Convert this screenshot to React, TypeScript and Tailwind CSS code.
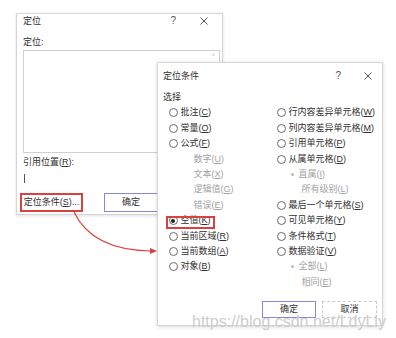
import React from 'react';

type Item = {
  t: string;
  k: string;
  sub?: 0 | 1 | 2;
  checked?: boolean;
  boxed?: boolean;
};

const leftItems: Item[] = [
  { t: '批注', k: 'C' },
  { t: '常量', k: 'O' },
  { t: '公式', k: 'F' },
  { t: '数字', k: 'U', sub: 1 },
  { t: '文本', k: 'X', sub: 1 },
  { t: '逻辑值', k: 'G', sub: 1 },
  { t: '错误', k: 'E', sub: 1 },
  { t: '空值', k: 'K', checked: true, boxed: true },
  { t: '当前区域', k: 'R' },
  { t: '当前数组', k: 'A' },
  { t: '对象', k: 'B' },
];

const rightItems: Item[] = [
  { t: '行内容差异单元格', k: 'W' },
  { t: '列内容差异单元格', k: 'M' },
  { t: '引用单元格', k: 'P' },
  { t: '从属单元格', k: 'D' },
  { t: '直属', k: 'I', sub: 1 },
  { t: '所有级别', k: 'L', sub: 2 },
  { t: '最后一个单元格', k: 'S' },
  { t: '可见单元格', k: 'Y' },
  { t: '条件格式', k: 'T' },
  { t: '数据验证', k: 'V' },
  { t: '全部', k: 'L', sub: 1 },
  { t: '相同', k: 'E', sub: 2 },
];

function Label({ t, k }: { t: string; k: string }) {
  return (
    <span>
      {t}(<span className="underline underline-offset-1">{k}</span>)
    </span>
  );
}

function Radio({ checked }: { checked?: boolean }) {
  return (
    <span className="flex h-[9px] w-[9px] shrink-0 items-center justify-center rounded-full border border-[#6b6b6b] bg-white">
      {checked && <span className="h-[4px] w-[4px] rounded-full bg-[#222]" />}
    </span>
  );
}

function LeftRow({ item }: { item: Item }) {
  if (item.sub) {
    return (
      <div className="flex h-[15.4px] items-center pl-[25px] text-[#a3a3a3]">
        <Label t={item.t} k={item.k} />
      </div>
    );
  }
  return (
    <div className="relative flex h-[15.4px] items-center gap-[3px]">
      <Radio checked={item.checked} />
      <Label t={item.t} k={item.k} />
      {item.boxed && (
        <span className="absolute left-[-3px] top-[2.5px] h-[13px] w-[49px] border-2 border-[#d9413f]" />
      )}
    </div>
  );
}

function RightRow({ item }: { item: Item }) {
  if (item.sub === 1) {
    return (
      <div className="flex h-[15.4px] items-center gap-[5px] pl-[14px] text-[#a3a3a3]">
        <span className="h-[3px] w-[3px] rounded-full bg-[#bdbdbd]" />
        <Label t={item.t} k={item.k} />
      </div>
    );
  }
  if (item.sub === 2) {
    return (
      <div className="flex h-[15.4px] items-center pl-[25px] text-[#a3a3a3]">
        <Label t={item.t} k={item.k} />
      </div>
    );
  }
  return (
    <div className="flex h-[15.4px] items-center gap-[3px]">
      <Radio />
      <Label t={item.t} k={item.k} />
    </div>
  );
}

function TitleBar({ title, gap }: { title: string; gap: string }) {
  return (
    <div className="flex h-[14px] items-center justify-between">
      <span>{title}</span>
      <div className={`flex items-center pr-[10px] text-[#555] ${gap}`}>
        <span className="text-[10px]">?</span>
        <svg width="8" height="8" viewBox="0 0 8 8" className="stroke-[#555]">
          <path d="M0.5 0.5 L7.5 7.5 M7.5 0.5 L0.5 7.5" strokeWidth="1" />
        </svg>
      </div>
    </div>
  );
}

export default function App() {
  return (
    <div className="relative h-[338px] w-[396px] overflow-hidden bg-white font-[family-name:'Liberation_Sans','Noto_Sans_CJK_SC',sans-serif] text-[9px] leading-none text-[#303030]">
      {/* 定位 dialog */}
      <div className="absolute left-[16px] top-[13px] flex h-[202px] w-[207px] flex-col border border-[#d6d6d6] bg-white px-[6px] pr-[4px] pt-0 shadow-[0_1px_3px_rgba(0,0,0,0.12)]">
        <TitleBar title="定位" gap="gap-[24px]" />
        <div className="mt-[8px] flex h-[12px] items-center">定位:</div>
        <div className="relative mt-[2px] h-[103px] w-[197px] border border-[#cfcfcf]">
          <span className="absolute right-[4px] top-[1px] text-[7px] text-[#b5b5b5]">^</span>
        </div>
        <div className="mt-[3px] flex h-[12px] items-center">
          <Label t="引用位置" k="R" />:
        </div>
        <div className="flex h-[20px] w-[197px] items-center pl-[1px]">
          <span className="h-[9px] w-px bg-[#555]" />
        </div>
        <div className="mt-[5px] flex items-center">
          <div className="-ml-[3px] flex h-[19px] w-[63px] items-center justify-center border-2 border-[#d9413f]">
            定位条件(<span className="underline underline-offset-1">S</span>)...
          </div>
          <div className="ml-[21px] flex h-[19px] w-[54px] items-center justify-center border border-[#8a88d6]">
            确定
          </div>
        </div>
      </div>

      {/* curved arrow */}
      <svg className="pointer-events-none absolute left-0 top-0" width="396" height="338">
        <path d="M74 212 Q92 250 151 251" fill="none" stroke="#d9413f" strokeWidth="1.2" />
        <path d="M150 248 L157 251 L150 254 Z" fill="#d9413f" />
      </svg>

      {/* 定位条件 dialog */}
      <div className="absolute left-[157px] top-[62px] flex h-[264px] w-[226px] flex-col border border-[#d6d6d6] bg-white pl-[5px] pt-[6px] shadow-[0_1px_4px_rgba(0,0,0,0.15)]">
        <TitleBar title="定位条件" gap="gap-[23px]" />
        <div className="mt-[8px] flex h-[12px] items-center">选择</div>
        <div className="mt-[2.3px] flex pl-[5.5px]">
          <div className="flex w-[108px] flex-col">
            {leftItems.map((it) => (
              <LeftRow key={it.t} item={it} />
            ))}
          </div>
          <div className="flex flex-col">
            {rightItems.map((it) => (
              <RightRow key={it.t} item={it} />
            ))}
          </div>
        </div>
        <div className="mt-[11px] flex justify-end gap-[6px] pr-[5px]">
          <div className="flex h-[17px] w-[54px] items-center justify-center border border-[#8a88d6]">确定</div>
          <div className="flex h-[17px] w-[55px] items-center justify-center border border-dashed border-[#c9c9c9]">取消</div>
        </div>
      </div>

      {/* watermark */}
      <div className="absolute left-[192px] top-[314px] text-[16px] leading-[16px] text-[#cdcdcd] font-[family-name:'Liberation_Sans',sans-serif]">
        https://blog.csdn.net/LdyLly
      </div>
    </div>
  );
}
